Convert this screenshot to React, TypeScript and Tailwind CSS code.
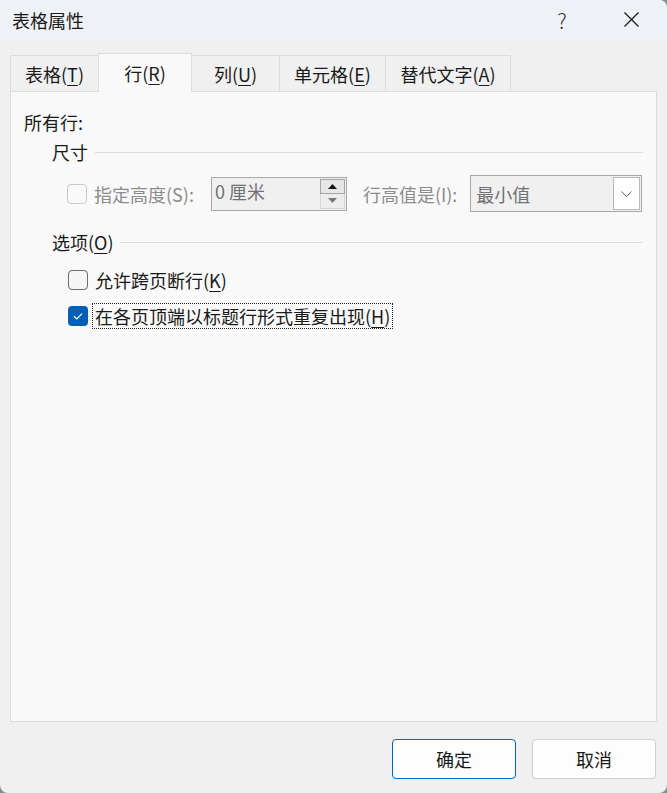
import React from "react";

function U({ children }: { children: React.ReactNode }) {
  return <span className="underline underline-offset-[3px] decoration-1">{children}</span>;
}

function Tab({ w, active, children }: { w: string; active?: boolean; children: React.ReactNode }) {
  if (active) {
    return (
      <div
        className={`${w} relative z-10 -ml-px -mb-px h-[39px] shrink-0 flex items-center justify-center border border-b-0 border-[#dcdcdc] bg-[#f9f9f9] text-[#1a1a1a]`}
      >
        {children}
      </div>
    );
  }
  return (
    <div
      className={`${w} -ml-px first:ml-0 h-[36px] shrink-0 flex items-center justify-center border border-b-0 border-[#dcdcdc] bg-[#f0f0f0] text-[#1a1a1a]`}
    >
      {children}
    </div>
  );
}

export default function App() {
  return (
    <div className="w-[667px] h-[793px] bg-[#8c8c8c]">
      <div className="w-[667px] h-[793px] flex flex-col bg-[#f0f0f0] rounded-tr-[8px] rounded-bl-[8px] rounded-br-[8px] overflow-hidden font-['Noto_Sans_CJK_SC','Noto_Sans',sans-serif] text-[18px] leading-[24px] text-[#1a1a1a] whitespace-nowrap">
        {/* Title bar */}
        <div className="h-[41px] shrink-0 flex items-center pb-[2px] bg-[#eef2f7]">
          <div className="ml-[12px] flex-1">表格属性</div>
          <div className="w-[20px] text-center text-[21px] font-light text-[#333] mr-[50px]">?</div>
          <div className="w-[18px] h-[18px] mr-[27px] flex items-center justify-center">
            <svg width="17" height="17" viewBox="0 0 17 17">
              <path d="M1.5 1.5 L15.5 15.5 M15.5 1.5 L1.5 15.5" stroke="#1a1a1a" strokeWidth="1.3" fill="none" />
            </svg>
          </div>
        </div>

        {/* Tabs */}
        <div className="mt-[12px] ml-[10px] h-[38px] shrink-0 flex items-end">
          <Tab w="w-[89px]">
            表格(<U>T</U>)
          </Tab>
          <Tab w="w-[94px]" active>
            行(<U>R</U>)
          </Tab>
          <Tab w="w-[89px]">
            列(<U>U</U>)
          </Tab>
          <Tab w="w-[107px]">
            单元格(<U>E</U>)
          </Tab>
          <Tab w="w-[126px]">
            替代文字(<U>A</U>)
          </Tab>
        </div>

        {/* Panel */}
        <div className="ml-[10px] w-[647px] h-[631px] shrink-0 border border-[#dcdcdc] bg-[#f9f9f9] pt-[18px] pl-[13px] pr-[13px]">
          <div className="h-[24px]">所有行:</div>

          {/* 尺寸 header */}
          <div className="mt-[6px] h-[24px] flex items-center ml-[28px]">
            <span>尺寸</span>
            <div className="ml-[7px] flex-1 h-px bg-[#dcdcdc]" />
          </div>

          {/* Size row */}
          <div className="mt-[11px] h-[37px] flex items-center">
            <div className="ml-[43px] shrink-0 w-[20px] h-[20px] rounded-[4px] border border-[#c9c9c9] bg-[#f9f9f9]" />
            <span className="ml-[7px] shrink-0 text-[#8c8c8c]">指定高度(S):</span>
            <div className="ml-[17px] shrink-0 w-[136px] h-[34px] border border-[#a8a8a8] bg-[#f0f0f0] flex items-start relative">
              <span className="ml-[3px] mt-[1px] text-[#707070]">0 厘米</span>
              <div className="absolute right-[1px] top-[1px] w-[25px] flex flex-col">
                <div className="h-[15px] border border-[#a5a5a5] bg-[#e6e6e6] flex items-center justify-center">
                  <svg width="9" height="5" viewBox="0 0 9 5">
                    <path d="M0 5 L4.5 0 L9 5 Z" fill="#111" />
                  </svg>
                </div>
                <div className="h-[15px] border border-t-0 border-[#d6d6d6] bg-[#ededed] flex items-center justify-center">
                  <svg width="9" height="5" viewBox="0 0 9 5">
                    <path d="M0 0 L4.5 5 L9 0 Z" fill="#777" />
                  </svg>
                </div>
              </div>
            </div>
            <span className="ml-[16px] shrink-0 text-[#8c8c8c]">行高值是(I):</span>
            <div className="ml-[13px] shrink-0 w-[172px] h-[37px] border border-[#a8a8a8] bg-[#f0f0f0] flex items-center relative">
              <span className="ml-[5px] text-[#707070]">最小值</span>
              <div className="absolute right-[1px] top-[1px] bottom-[1px] w-[27px] border border-[#b8b8b8] bg-white flex items-center justify-center">
                <svg width="11" height="6" viewBox="0 0 11 6">
                  <path d="M0.5 0.5 L5.5 5.5 L10.5 0.5" stroke="#666" strokeWidth="1" fill="none" />
                </svg>
              </div>
            </div>
          </div>

          {/* 选项 header */}
          <div className="mt-[18px] h-[24px] flex items-center ml-[28px]">
            <span>
              选项(<U>O</U>)
            </span>
            <div className="ml-[6px] flex-1 h-px bg-[#dcdcdc]" />
          </div>

          {/* Checkbox 1 */}
          <div className="mt-[14px] h-[24px] flex items-center">
            <div className="ml-[44px] shrink-0 w-[20px] h-[20px] rounded-[4px] border border-[#6b6b6b] bg-[#f5f5f5]" />
            <span className="ml-[7px]">
              允许跨页断行(<U>K</U>)
            </span>
          </div>

          {/* Checkbox 2 */}
          <div className="mt-[11px] h-[26px] flex items-center">
            <div className="ml-[44px] shrink-0 w-[20px] h-[20px] rounded-[4px] bg-[#005fb8] flex items-center justify-center">
              <svg width="20" height="20" viewBox="0 0 20 20">
                <path d="M6 10.3 L8.8 13 L14 7.6" stroke="#fff" strokeWidth="1.2" fill="none" />
              </svg>
            </div>
            <div className="ml-[4px] h-[26px] px-[2px] border border-dotted border-[#222] flex items-center">
              在各页顶端以标题行形式重复出现(<U>H</U>)
            </div>
          </div>
        </div>

        {/* Footer */}
        <div className="flex-1 flex justify-end items-start pt-[17px] pr-[11px] gap-[16px]">
          <button className="w-[124px] h-[40px] rounded-[4px] border border-[#0067c0] bg-[#fdfdfd] flex items-center justify-center">
            确定
          </button>
          <button className="w-[124px] h-[40px] rounded-[4px] border border-[#d0d0d0] bg-[#fdfdfd] flex items-center justify-center">
            取消
          </button>
        </div>
      </div>
    </div>
  );
}
